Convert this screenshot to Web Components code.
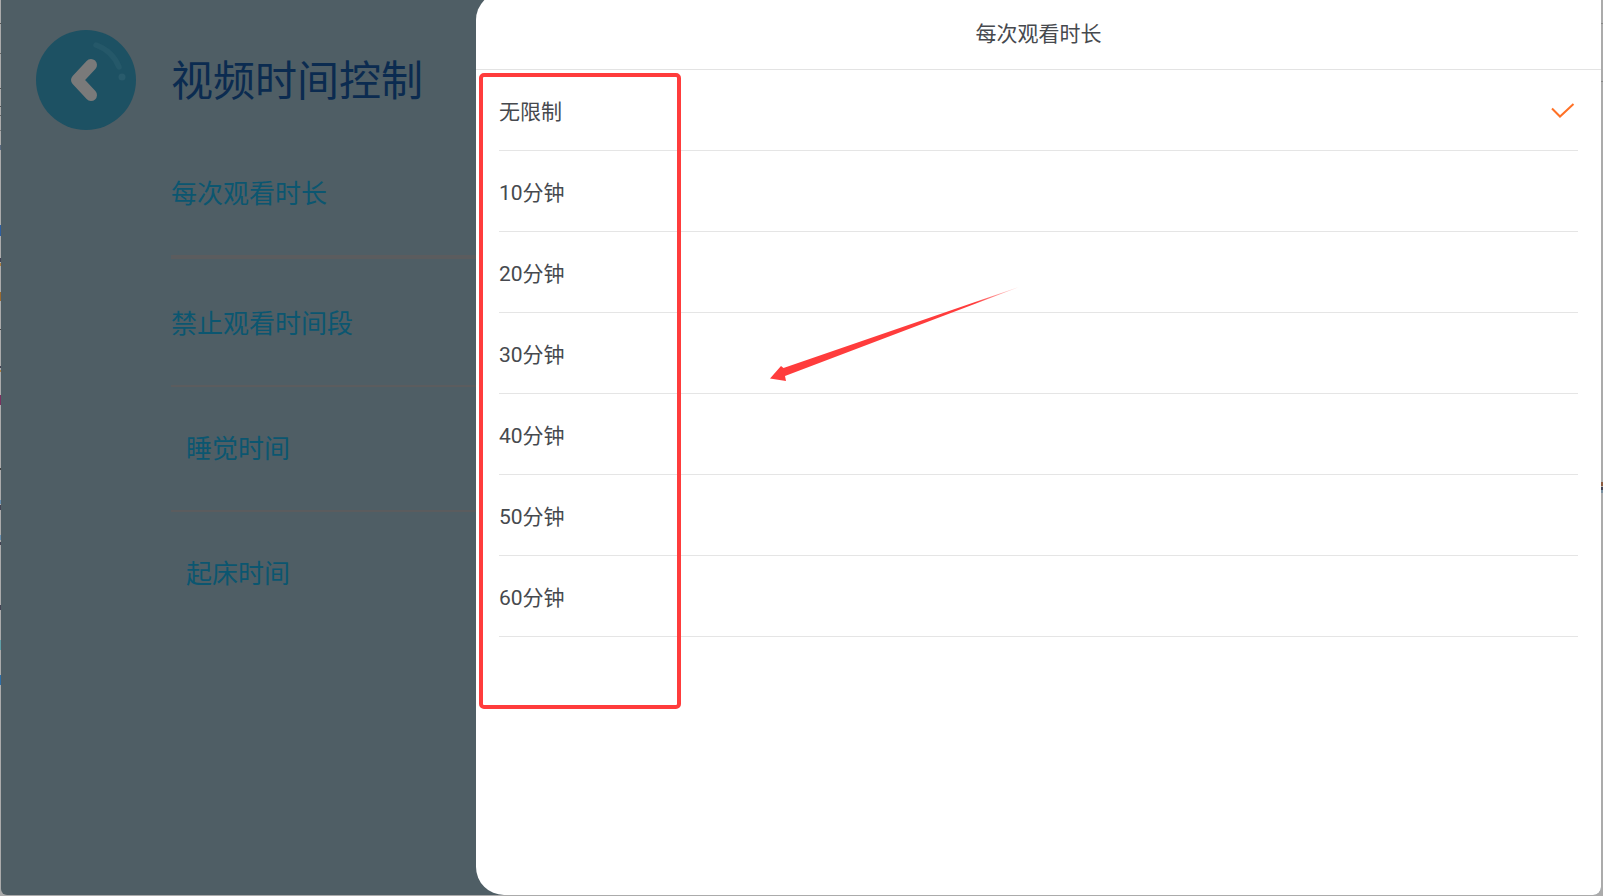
<!DOCTYPE html>
<html lang="zh">
<head>
<meta charset="utf-8">
<title>视频时间控制</title>
<style>
	html, body { margin: 0; padding: 0; }
	body { font-family: Roboto, "Noto Sans CJK SC", sans-serif; overflow: hidden; }
</style>
</head>
<body>

<time-screen>
	<time-sidebar slot="side" heading="视频时间控制">
		<nav-row height="129" rule="4" lift="2">每次观看时长</nav-row>
		<nav-row height="128" rule="2" lift="2">禁止观看时间段</nav-row>
		<nav-row height="125" rule="2" indent="15" lift="4">睡觉时间</nav-row>
		<nav-row height="123" indent="15" lift="4">起床时间</nav-row>
	</time-sidebar>
	<option-sheet slot="main" heading="每次观看时长">
		<option-row selected>无限制</option-row>
		<option-row>10分钟</option-row>
		<option-row>20分钟</option-row>
		<option-row>30分钟</option-row>
		<option-row>40分钟</option-row>
		<option-row>50分钟</option-row>
		<option-row>60分钟</option-row>
	</option-sheet>
	<red-marks slot="marks"></red-marks>
</time-screen>

<script>
// strip of other windows showing past the edge of the screenshot
function rimGradient(bands) {
	const stops = bands.map(b => `transparent ${b[0]}px, ${b[2]} ${b[0]}px, ${b[2]} ${b[1]}px, transparent ${b[1]}px`);
	return `linear-gradient(to bottom, ${stops.join(', ')})`;
}

class TimeScreen extends HTMLElement {
	constructor() {
		super();
		const left = rimGradient([
			[23, 24, '#555'], [53, 54, '#666'], [88, 89, '#555'], [106, 107, '#555'], [115, 116, '#666'],
			[130, 131, '#777'], [145, 150, '#5a6a80'], [225, 236, '#2f5fa0'], [258, 262, '#445'], [263, 266, '#b08040'],
			[292, 301, '#9a6a30'], [329, 330, '#444'], [366, 368, '#445'], [370, 372, '#b08040'], [395, 405, '#7a3060'],
			[468, 470, '#444'], [500, 504, '#6a90b0'], [505, 510, '#445'], [535, 540, '#6a90b0'], [542, 545, '#445'],
			[605, 610, '#445'], [640, 650, '#60a0a8'], [675, 685, '#2f6fa8']
		]);
		const right = rimGradient([[23, 24, '#888'], [81, 82, '#888'], [482, 486, '#8a5a40'], [487, 490, '#445'], [490, 493, '#7a90a0']]);
		this.attachShadow({mode: 'open'}).innerHTML = `
			<style>
				:host {
					display: block;
					position: relative;
					box-sizing: border-box;
					width: 1603px;
					height: 896px;
					padding: 0 2px 1px 1px;
					background:
						${left} 0 0 / 1px 100% no-repeat,
						${right} 100% 0 / 2px 100% no-repeat,
						#ababab;
				}
				.window {
					display: grid;
					grid-template-columns: 475px 1fr;
					height: 100%;
					overflow: hidden;
					border-radius: 0 0 8px 6px;
					background: #4f5e65;
				}
			</style>
			<div class="window">
				<slot name="side"></slot>
				<slot name="main"></slot>
			</div>
			<slot name="marks"></slot>
		`;
	}
}

class TimeSidebar extends HTMLElement {
	constructor() {
		super();
		this.attachShadow({mode: 'open'}).innerHTML = `
			<style>
				:host { display: block; min-width: 0; }
				header {
					display: flex;
					align-items: center;
					gap: 35px;
					height: 100px;
					padding: 30px 0 0 35px;
				}
				h1 {
					margin: 0;
					padding-top: 4px;
					font-size: 42px;
					font-weight: 400;
					line-height: 1;
					color: #0b2b50;
				}
				.rows { padding-left: 170px; }
			</style>
			<header>
				<back-button></back-button>
				<h1></h1>
			</header>
			<div class="rows"><slot></slot></div>
		`;
		this.shadowRoot.querySelector('h1').textContent = this.getAttribute('heading');
	}
}

class BackButton extends HTMLElement {
	constructor() {
		super();
		this.attachShadow({mode: 'open'}).innerHTML = `
			<style>
				:host { display: block; flex: none; width: 100px; height: 100px; }
				svg { display: block; }
			</style>
			<svg width="100" height="100" viewBox="0 0 100 100">
				<circle cx="50" cy="50" r="50" fill="#1d5163"/>
				<path d="M60 15C71 19 79 27 83 37" fill="none" stroke="#255869" stroke-width="5.5" stroke-linecap="round"/>
				<circle cx="86" cy="47" r="3.5" fill="#295b6c"/>
				<path d="M55 35L41 50L55 65" fill="none" stroke="#7a7a7a" stroke-width="12" stroke-linecap="round" stroke-linejoin="round"/>
			</svg>
		`;
	}
}

class NavRow extends HTMLElement {
	constructor() {
		super();
		const rule = this.getAttribute('rule');
		this.attachShadow({mode: 'open'}).innerHTML = `
			<style>
				:host {
					display: flex;
					align-items: center;
					box-sizing: border-box;
					height: ${this.getAttribute('height')}px;
					padding-left: ${this.getAttribute('indent') || 0}px;
					padding-bottom: ${this.getAttribute('lift') || 0}px;
					font-size: 26px;
					color: #0b5670;
					${rule ? `border-bottom: ${rule}px solid #5b5c5e;` : ''}
				}
			</style>
			<slot></slot>
		`;
	}
}

class OptionSheet extends HTMLElement {
	constructor() {
		super();
		this.attachShadow({mode: 'open'}).innerHTML = `
			<style>
				:host {
					display: block;
					box-sizing: border-box;
					margin-top: -8px;
					height: calc(100% + 8px);
					background: #fff;
					border-radius: 28px 0 0 28px;
				}
				header {
					display: flex;
					align-items: center;
					justify-content: center;
					box-sizing: border-box;
					height: 78px;
					padding-top: 2px;
					font-size: 21px;
					color: #46494e;
					border-bottom: 1.5px solid #e3e3e3;
				}
				.rows { padding: 0 23px 0 23px; }
			</style>
			<header></header>
			<div class="rows"><slot></slot></div>
		`;
		this.shadowRoot.querySelector('header').textContent = this.getAttribute('heading');
	}
}

class OptionRow extends HTMLElement {
	constructor() {
		super();
		const check = this.hasAttribute('selected') ? `
			<svg width="26" height="18" viewBox="0 0 26 18">
				<path d="M2 3.5L10 11.5L23.5 -1" transform="translate(0 4)" fill="none" stroke="#ff7126" stroke-width="2"/>
			</svg>` : '';
		this.attachShadow({mode: 'open'}).innerHTML = `
			<style>
				:host {
					display: flex;
					align-items: center;
					justify-content: space-between;
					box-sizing: border-box;
					height: 81px;
					padding-bottom: 1px;
					font-size: 21px;
					color: #46494e;
					border-bottom: 1.5px solid #e5e5e5;
				}
				svg { display: block; margin: 1px 2px 0 0; }
			</style>
			<span><slot></slot></span>
			${check}
		`;
	}
}

// the reviewer's red frame and arrow drawn over the screenshot
class RedMarks extends HTMLElement {
	constructor() {
		super();
		this.attachShadow({mode: 'open'}).innerHTML = `
			<style>
				:host { position: absolute; inset: 0; pointer-events: none; }
				.frame {
					position: absolute;
					left: 479px;
					top: 73px;
					width: 202px;
					height: 636px;
					box-sizing: border-box;
					border: 4px solid #ff3c3c;
					border-radius: 5px;
				}
				svg { position: absolute; left: 0; top: 0; }
			</style>
			<div class="frame"></div>
			<svg width="1603" height="896" viewBox="0 0 1603 896">
				<defs>
					<linearGradient id="tail" gradientUnits="userSpaceOnUse" x1="1019" y1="287" x2="975" y2="303">
						<stop offset="0" stop-color="#ff3c3c" stop-opacity="0.1"/>
						<stop offset="1" stop-color="#ff3c3c"/>
					</linearGradient>
				</defs>
				<path d="M1019 287L783.5 368L781 366L770 378.5L786 381L785 376Z" fill="url(#tail)"/>
			</svg>
		`;
	}
}

customElements.define('time-screen', TimeScreen);
customElements.define('time-sidebar', TimeSidebar);
customElements.define('back-button', BackButton);
customElements.define('nav-row', NavRow);
customElements.define('option-sheet', OptionSheet);
customElements.define('option-row', OptionRow);
customElements.define('red-marks', RedMarks);
</script>
</body>
</html>
